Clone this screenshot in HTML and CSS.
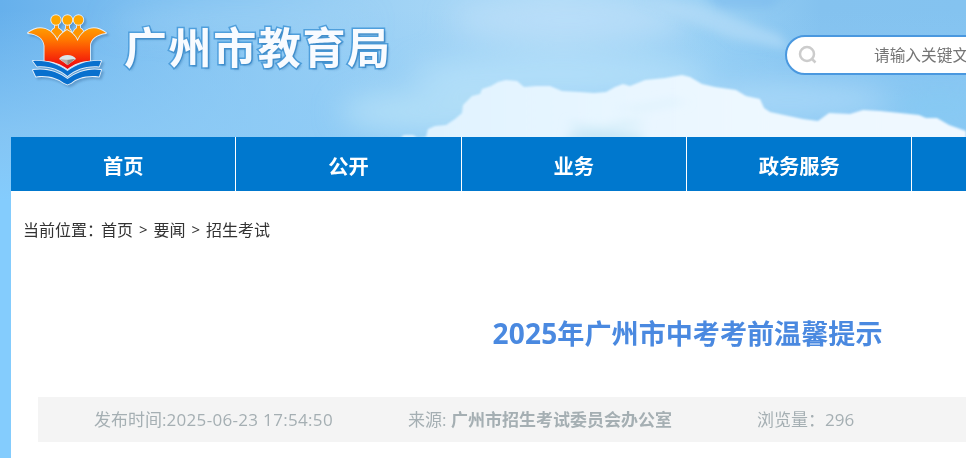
FILE: index.html
```
<!DOCTYPE html>
<html lang="zh-CN">
<head>
    <meta charset="utf-8">
    <title>2025年广州市中考考前温馨提示</title>
    <meta name="viewport" content="width=device-width, initial-scale=1">
    <link rel="stylesheet" href="styles.css">
</head>
<body>
<svg class="sky" width="966" height="200" viewBox="0 0 966 200" aria-hidden="true">
    <defs>
        <linearGradient id="sky-x" x1="0" x2="1" y1="0" y2="0">
            <stop offset="0" stop-color="#66b0ec"/>
            <stop offset="0.2" stop-color="#85c4f2"/>
            <stop offset="0.4" stop-color="#9fd2f5"/>
            <stop offset="0.58" stop-color="#b0dbf7"/>
            <stop offset="0.74" stop-color="#99d0f4"/>
            <stop offset="0.85" stop-color="#84c2ef"/>
            <stop offset="1" stop-color="#84c3f0"/>
        </linearGradient>
        <linearGradient id="sky-y" x1="0" x2="0" y1="0" y2="1">
            <stop offset="0.05" stop-color="#8dcbf6" stop-opacity="0"/>
            <stop offset="0.65" stop-color="#8dcbf6" stop-opacity="0.75"/>
            <stop offset="1" stop-color="#84ccfd"/>
        </linearGradient>
        <linearGradient id="cloud-fill" x1="0" x2="1" y1="0" y2="0">
            <stop offset="0" stop-color="#dff2fe"/>
            <stop offset="0.3" stop-color="#e6f5ff"/>
            <stop offset="0.6" stop-color="#edf8ff"/>
            <stop offset="1" stop-color="#f0f8ff"/>
        </linearGradient>
        <filter id="haze" x="-50%" y="-100%" width="200%" height="300%"><feGaussianBlur stdDeviation="14"/></filter>
        <filter id="soft" x="-20%" y="-50%" width="140%" height="200%"><feGaussianBlur stdDeviation="5"/></filter>
        <filter id="edge" x="-5%" y="-10%" width="110%" height="120%"><feGaussianBlur stdDeviation="1"/></filter>
    </defs>
    <rect width="966" height="200" fill="url(#sky-x)"/>
    <rect width="966" height="200" fill="url(#sky-y)"/>
    <g filter="url(#haze)">
        <ellipse cx="240" cy="22" rx="130" ry="9" fill="#a3d4f6" opacity="0.7"/>
        <ellipse cx="570" cy="20" rx="120" ry="22" fill="#bbdff9" opacity="0.8"/>
        <ellipse cx="560" cy="75" rx="150" ry="22" fill="#b4dff8" opacity="0.9"/>
        <ellipse cx="430" cy="112" rx="90" ry="22" fill="#b3dff7" opacity="0.9"/>
        <ellipse cx="790" cy="100" rx="100" ry="18" fill="#acdaf7" opacity="0.8"/>
        <ellipse cx="940" cy="108" rx="50" ry="14" fill="#84cbf2" opacity="0.7"/>
    </g>
    <g filter="url(#soft)">
        <path d="M640 0L700 5L780 35L790 50L730 38L690 22z" fill="#b3dcf7" opacity="0.7"/>
        <path d="M700 -8L790 -8L770 8L720 8z" fill="#7dbcee" opacity="0.7"/>
    </g>
    <g filter="url(#edge)">
        <path d="M398 140L404 135L413 135L418 138L426 137L428 129L435 126L446 125L455 119L462 113L463 105L472 96L480 94L482 89L491 86L498 82L506 80L517 81L524 87L536 86L550 86L562 91L580 92L594 93L606 92L615 87L623 84L630 86L645 80L665 78L682 75L690 77L702 84L715 87L736 90L746 96L760 99L764 108L770 112L784 115L803 119L818 121L829 113L850 114L863 110L880 111L900 113L919 115L926 118L937 118L949 125L966 131L966 145L398 145z" fill="url(#cloud-fill)"/>
    </g>
    <g filter="url(#soft)">
        <ellipse cx="605" cy="137" rx="40" ry="5" fill="#b9e0f3" opacity="0.8"/>
        <path d="M566 122L600 126L630 120L650 124L610 130L580 132z" fill="#cfebf8" opacity="0.7"/>
        <path d="M610 108L640 105L672 99L690 102L640 112z" fill="#dcf1fc" opacity="0.7"/>
    </g>
</svg>

<div class="page">
    <header class="header">
        <svg class="logo" width="84" height="76" viewBox="0 0 84 76" aria-hidden="true">
            <defs>
                <linearGradient id="crown" x1="0" x2="0" y1="18" y2="56" gradientUnits="userSpaceOnUse">
                    <stop offset="0" stop-color="#ff9c00"/>
                    <stop offset="0.3" stop-color="#ff7a00"/>
                    <stop offset="0.65" stop-color="#fb4205"/>
                    <stop offset="1" stop-color="#ee0d0d"/>
                </linearGradient>
            </defs>
            <g stroke="#e4effa" stroke-width="1.8" stroke-linejoin="round" paint-order="stroke">
                <path fill="#ff9600" d="M26 26C27 21 29 19 31 18V14H34V18C36 19 38 21 40 24C40 21 42 19 42 18V14H45V18C46 19 47 21 48 24C50 21 51 19 53 18V14H56V18C58 19 60 21 61 26L56 34H31z"/>
                <circle fill="#ffa600" cx="32" cy="10" r="4.800"/>
                <circle fill="#ffa600" cx="43.500" cy="10" r="4.800"/>
                <circle fill="#ffa600" cx="54.500" cy="10" r="4.800"/>
                <path fill="url(#crown)" d="M4 23C15 14 28 18 33.500 31C34 27 38 23 43 20C49 23 52 27 53.500 31C59 18 71 14 82 23C73 24 66 29 66 36V51C57 51 50 54 43.500 59C37 54 29 51 20.500 51V36C20 29 14 24 4 23z"/>
                <path fill="#0870ce" d="M9 51C22 50 34 54 43.500 61C53 54 65 50 77 51L75 56.500C62 55.500 52 59 43.500 66C35 59 25 55.500 13 56.500z"/>
                <path fill="#0870ce" d="M9 60C23 58 34 62 43.500 69C53 62 65 58 77 60L75 66.500C62 65 53 68 47 73L43.500 74.500L40 73C33 68 25 65 12 66.500z"/>
            </g>
            <path d="M35 49C38 43.500 49 43.500 52 49L43.500 55z" fill="#dbe6ea"/>
            <path d="M36 49L43.500 55L51 49C47 50 40 50 36 49z" fill="#b8ada7"/>
            <path d="M43.500 50V55L51 49z" fill="#8f8983"/>
        </svg>
        <div class="site-name">广州市教育局</div>
        <div class="search">
            <svg class="search-icon" width="20" height="20" viewBox="0 0 20 20" aria-hidden="true">
                <circle cx="9" cy="9" r="7" fill="none" stroke="#cccccc" stroke-width="2.500"/>
                <path d="M14 14L17.500 17.500" stroke="#cccccc" stroke-width="2.500"/>
            </svg>
            <span class="search-hint">请输入关键文字</span>
        </div>
    </header>

    <nav class="nav">
        <a class="nav-item">首页</a>
        <a class="nav-item">公开</a>
        <a class="nav-item">业务</a>
        <a class="nav-item">政务服务</a>
        <a class="nav-item"></a>
        <a class="nav-item"></a>
    </nav>

    <main class="content">
        <div class="crumbs">
            <span class="crumbs-label">当前位置：</span>
            <a>首页</a><span class="crumbs-sep">&gt;</span><a>要闻</a><span class="crumbs-sep">&gt;</span><a>招生考试</a>
        </div>
        <h1><span class="year">2025</span>年广州市中考考前温馨提示</h1>
        <div class="meta">
            <span class="meta-time">发布时间:<span class="date">2025-06-23 17:54:50</span></span>
            <span class="meta-source">来源: <b>广州市招生考试委员会办公室</b></span>
            <span class="meta-views">浏览量：296</span>
        </div>
    </main>
</div>
</body>
</html>
```
FILE: styles.css
```
* {
    box-sizing: border-box;
}

html {
    overflow: hidden;
}

body {
    margin: 0;
    height: 458px;
    overflow: hidden;
    background: #84ccfd;
    color: #333;
    font-family: "Noto Sans CJK SC", sans-serif;
    font-size: 16px;
}

/* sky picture lies under the whole page */
.sky {
    position: absolute;
    top: 0;
    left: 0;
    z-index: -1;
}

.page {
    width: 1352px;
    margin-left: 11px;
}

.header {
    display: flex;
    align-items: flex-start;
    height: 137px;
    padding: 10px 0 0 13px;
}

.logo {
    flex: none;
    filter: drop-shadow(2px 2px 1px rgba(40, 90, 140, 0.35));
}

.site-name {
    flex: none;
    width: 290px;
    margin: 3px 0 0 16px;
    color: #f8fbff;
    font-size: 43px;
    font-weight: bold;
    line-height: 64px;
    letter-spacing: 1.6px;
    white-space: nowrap;
    -webkit-text-stroke: 3px #4f9fdc;
    paint-order: stroke fill;
    text-shadow: 2px 2px 2px rgba(40, 110, 170, 0.35);
}

.search {
    display: flex;
    flex: none;
    align-items: center;
    width: 380px;
    height: 40px;
    margin: 25px 0 0 371px;
    padding-left: 11px;
    border: 2px solid #4a98df;
    border-radius: 20px;
    background: #fff;
}

.search-hint {
    margin: -2px 0 0 56px;
    color: #757575;
    font-size: 15.7px;
}

.nav {
    display: grid;
    grid-template-columns: repeat(6, 1fr);
    height: 54px;
    background: #0078ce;
}

.nav-item {
    border-right: 1px solid #fff;
    color: #fff;
    font-size: 20.25px;
    font-weight: bold;
    line-height: 57px;
    text-align: center;
}

.content {
    height: 267px;
    padding: 26px 26px 0 27px;
    background: #fff;
}

.crumbs {
    display: flex;
    height: 24px;
    margin-left: -15px;
    line-height: 24px;
}

.crumbs-label {
    width: 78px;
    white-space: nowrap;
}

.crumbs-sep {
    width: 20.5px;
    font-family: "Noto Sans", sans-serif;
    font-size: 15px;
    text-align: center;
}

h1 {
    margin: 72px 0 0;
    color: #4a89e0;
    font-size: 27.1px;
    font-weight: bold;
    line-height: 40px;
    text-align: center;
}

.year {
    font-family: "Open Sans", sans-serif;
    font-size: 28px;
    letter-spacing: 0.2px;
}

.meta {
    display: flex;
    height: 45px;
    margin-top: 44px;
    padding-left: 56px;
    background: #f4f4f4;
    color: #a5afb3;
    font-family: "Open Sans", "Noto Sans CJK SC", sans-serif;
    font-size: 17px;
    line-height: 45px;
    white-space: nowrap;
}

.meta-time {
    width: 314px;
}

.date {
    letter-spacing: 0.32px;
}

.meta-source {
    width: 349px;
}
```
